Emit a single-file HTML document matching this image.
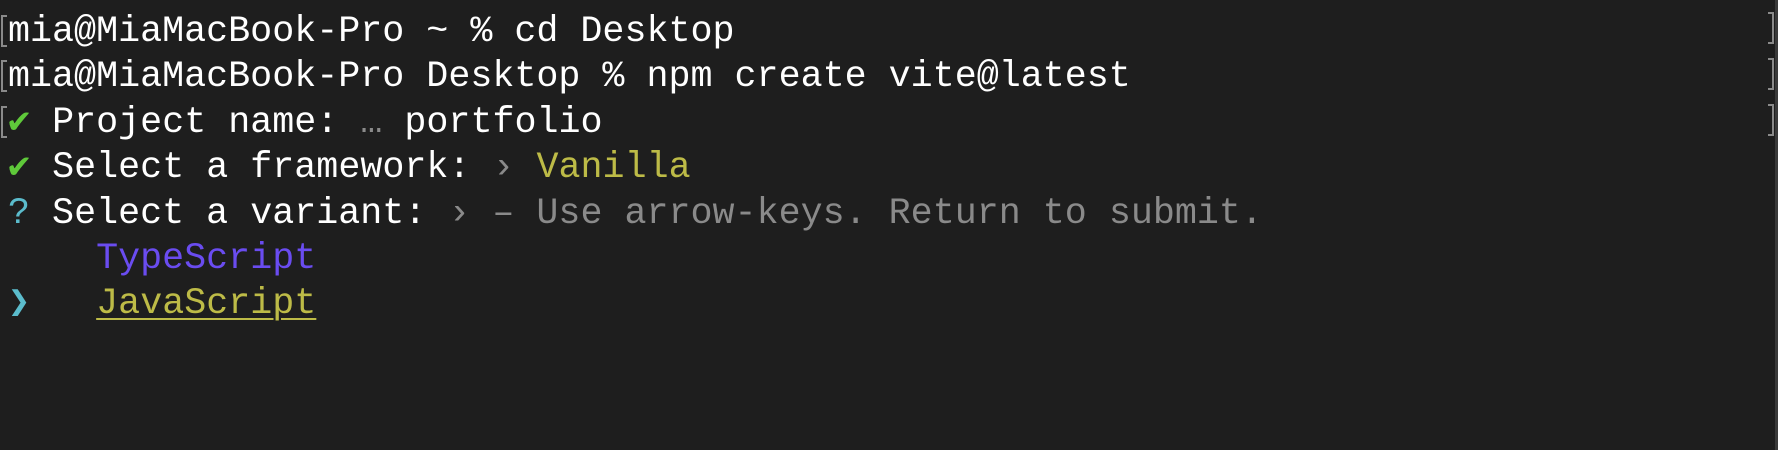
<!DOCTYPE html>
<html><head><meta charset="utf-8"><style>
html,body{margin:0;padding:0;background:#1e1e1e;width:1778px;height:450px;overflow:hidden}
.t{position:absolute;left:8px;top:10px;font-family:"Liberation Mono","DejaVu Sans Mono",monospace;font-size:36.7px;line-height:45.4px;color:#fff;white-space:pre}
.g{color:#5fc93a}.y{color:#bdbb47}.p{color:#6a4cf0}.c{color:#5bbccc}.d{color:#8a8a8a}
.u{text-decoration:underline;text-underline-offset:5px;text-decoration-thickness:2px}
.lb{position:absolute;left:1px;width:4px;height:28px;border:2px solid #8a8a8a;border-right:none}
.rb{position:absolute;left:1768px;width:4px;height:28px;border:2px solid #8a8a8a;border-left:none}
.sb{position:absolute;left:1775px;top:0;width:3px;height:450px;background:#3a3a3a}
</style></head><body>
<div class="lb" style="top:15px"></div>
<div class="lb" style="top:60px"></div>
<div class="lb" style="top:106px"></div>
<div class="rb" style="top:12px"></div>
<div class="rb" style="top:58px"></div>
<div class="rb" style="top:104px"></div>
<div class="sb"></div>
<div class="t">mia@MiaMacBook-Pro ~ % cd Desktop
mia@MiaMacBook-Pro Desktop % npm create vite@latest
<span class="g">✔</span> Project name: <span class="d">…</span> portfolio
<span class="g">✔</span> Select a framework: <span class="d">›</span> <span class="y">Vanilla</span>
<span class="c">?</span> Select a variant: <span class="d">› – Use arrow-keys. Return to submit.</span>
    <span class="p">TypeScript</span>
<span class="c">❯</span>   <span class="y u">JavaScript</span></div>
</body></html>
